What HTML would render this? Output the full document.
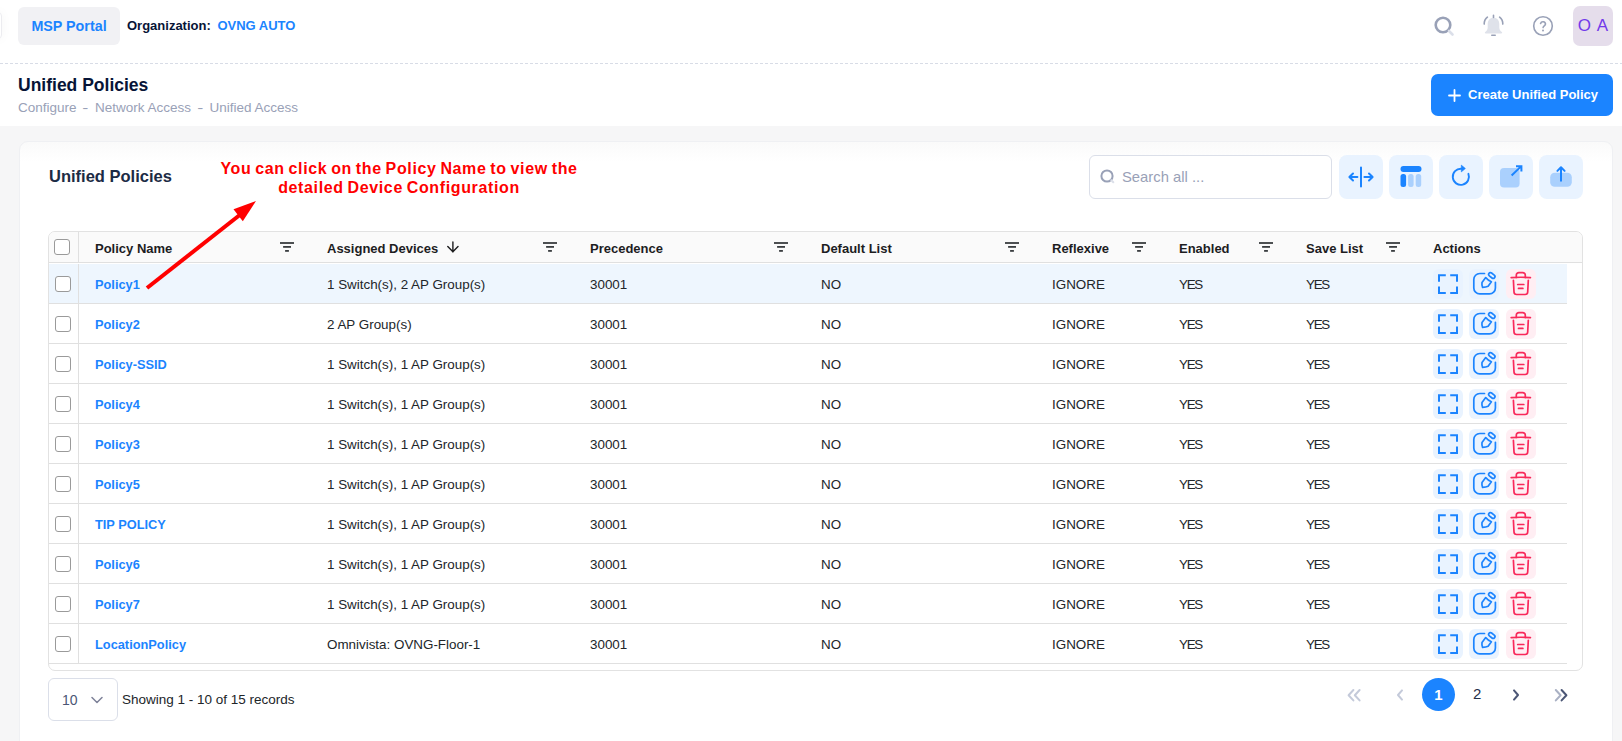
<!DOCTYPE html>
<html><head><meta charset="utf-8"><title>Unified Policies</title>
<style>
*{box-sizing:border-box;margin:0;padding:0}
html,body{width:1622px;height:741px;overflow:hidden;background:#fff;font-family:"Liberation Sans", sans-serif;}
.abs{position:absolute}
#hdr{position:absolute;left:0;top:0;width:1622px;height:126px;background:#fff}
#edge{position:absolute;left:-10px;top:12px;width:12px;height:27px;border:1px solid #ececf0;border-radius:4px;background:#fff;box-shadow:0 0 12px rgba(0,0,0,0.04)}
#msp{position:absolute;left:18px;top:7px;width:102px;height:38px;background:#f1f1f4;border-radius:6px;color:#1b84ff;font-size:14.3px;font-weight:700;line-height:38px;text-align:center}
#org{position:absolute;left:127px;top:18px;font-size:13px;font-weight:700;color:#071437;white-space:nowrap}
#org b{color:#1b84ff;margin-left:3px}
#dash{position:absolute;left:0;top:63px;width:1622px;height:1px;background-image:linear-gradient(to right,#d8dce6 60%,transparent 60%);background-size:5px 1px}
#avatar{position:absolute;left:1573px;top:6px;width:40px;height:40px;border-radius:7px;background:#e5ddeb;word-spacing:2px;color:#7239ea;font-size:17px;text-align:center;line-height:40px}
#title{position:absolute;left:18px;top:75px;font-size:17.5px;font-weight:700;color:#071437;white-space:nowrap}
#crumb{position:absolute;left:18px;top:100px;font-size:13.5px;color:#99a1b7;white-space:nowrap;word-spacing:0px}
#crumb i{font-style:normal;margin:0 7.4px 0 6.6px;display:inline-block;transform:scaleX(1.35)}
#create{position:absolute;left:1431px;top:74px;width:182px;height:42px;border-radius:7px;background:#1b84ff;color:#fff;font-size:13px;font-weight:700;line-height:42px;white-space:nowrap}
#create span{position:absolute;left:37px;top:0}
#create svg{position:absolute;left:17px;top:15px}
#content{position:absolute;left:0;top:126px;width:1622px;height:615px;background:#f6f6f7}
#card{position:absolute;left:19px;top:141px;width:1594px;height:700px;background:linear-gradient(#fafafa,#fff 20px);border:1px solid #eff0f3;border-radius:9px}
#ctitle{position:absolute;left:49px;top:167px;font-size:16.5px;font-weight:700;color:#1c2b45;white-space:nowrap}
#note{position:absolute;left:199px;top:159px;width:400px;text-align:center;color:#ff0000;font-size:16px;font-weight:700;line-height:19px;letter-spacing:0.63px;word-spacing:-1.2px}
#search{position:absolute;left:1089px;top:155px;width:243px;height:44px;border:1px solid #dbdfe9;border-radius:6px;background:#fff}
#search span{position:absolute;left:32px;top:13px;font-size:14.8px;color:#99a1b7;white-space:nowrap}
#search svg{position:absolute;left:10px;top:13px}
.tb{position:absolute;top:155px;width:44px;height:44px;border-radius:8px;background:#e9f3ff}
.tb svg{position:absolute;left:0;top:0}
#tbl{position:absolute;left:48px;top:231px;width:1535px;height:440px;border:1px solid #e2e2e2;border-radius:7px;overflow:hidden;background:#fff}
#th{position:absolute;left:0;top:0;width:1533px;height:31px;background:#fafafa;border-bottom:1px solid #e0e0e0}
.hc{position:absolute;top:9px;font-size:13px;font-weight:700;color:#1d1d1f;white-space:nowrap}
.flt{position:absolute;top:10px}
#vsep{position:absolute;left:29px;top:0;width:1px;height:31px;background:#e0e0e0}
#vsep2{position:absolute;left:29px;top:32px;width:1px;height:400px;background:#e0e0e0}
.row{position:absolute;left:0;width:1518px;height:40px;border-bottom:1px solid #e0e0e0;background:#fff}
.row.hl{background:#eef6fe}
.cb{position:absolute;left:6px;top:12px;width:16px;height:16px;border:1px solid #9a9a9a;border-radius:3px;background:#fff}
.c{position:absolute;top:13px;font-size:13.4px;color:#212529;white-space:nowrap}
a.c{color:#1b84ff;font-weight:700;font-size:12.8px;text-decoration:none}
.ys{letter-spacing:-1.3px}
.nm{left:46px} .dv{left:278px} .pr{left:541px} .df{left:772px} .rf{left:1003px} .en{left:1130px} .sl{left:1257px}
.ab{position:absolute;top:5px;width:30px;height:30px;border-radius:6px;background:#e9f3ff}
.ab.b3{background:#ffeef3}
.b1{left:1384px} .b2{left:1420px} .b3{left:1457px}
.ab svg{position:absolute;left:0;top:0}
#psel{position:absolute;left:48px;top:678px;width:70px;height:43px;border:1px solid #dbdfe9;border-radius:6px;background:#fff}
#psel span{position:absolute;left:13px;top:13px;font-size:14px;color:#4b5675}
#psel svg{position:absolute;left:42px;top:17px}
#showing{position:absolute;left:122px;top:692px;font-size:13.5px;color:#212529;white-space:nowrap}
#page1{position:absolute;left:1422px;top:677.5px;width:33px;height:33px;border-radius:50%;background:#1b84ff;color:#fff;font-size:15px;font-weight:700;text-align:center;line-height:33px}
#page2{position:absolute;left:1473px;top:685px;font-size:15px;color:#252f4a}
</style></head><body>
<div id="hdr">
 <div id="edge"></div>
 <div id="msp">MSP Portal</div>
 <div id="org">Organization: <b>OVNG AUTO</b></div>
 <div id="dash"></div>
 <svg class="abs" style="left:1432px;top:14px" width="26" height="26" viewBox="0 0 26 26"><circle cx="11" cy="11" r="7.3" fill="none" stroke="#99a1b7" stroke-width="2.6"/><path d="M17 17l3.5 3.5" stroke="#dbdfe9" stroke-width="2.6" stroke-linecap="round"/></svg>
 <svg class="abs" style="left:1476px;top:10px" width="36" height="32" viewBox="0 0 36 32"><path d="M17.5 7.8C13.8 7.8 11.7 10.5 11.7 14V17.5C11.7 19.5 10.5 21 9.2 22C8.5 22.6 8.9 23.5 9.8 23.5H25.2C26.1 23.5 26.5 22.6 25.8 22C24.5 21 23.3 19.5 23.3 17.5V14C23.3 10.5 21.2 7.8 17.5 7.8Z" fill="#dfe2ea"/><path d="M17.5 5.3V7.4M11.4 7.2A8.5 8.5 0 0 0 8.2 14.1M23.6 7.2A8.5 8.5 0 0 1 26.8 14.1M15.8 25.2H19.2" stroke="#99a1b7" stroke-width="1.6" stroke-linecap="round" fill="none"/></svg>
 <svg class="abs" style="left:1531px;top:14px" width="24" height="24" viewBox="0 0 24 24"><circle cx="12" cy="12" r="9.3" fill="none" stroke="#99a1b7" stroke-width="1.6"/><path d="M9.6 9.5a2.5 2.5 0 0 1 4.9.6c0 1.6-2.4 2-2.4 3.5" fill="none" stroke="#99a1b7" stroke-width="1.6" stroke-linecap="round"/><circle cx="12" cy="16.6" r="1" fill="#99a1b7"/></svg>
 <div id="avatar">O A</div>
 <div id="title">Unified Policies</div>
 <div id="crumb">Configure<i>-</i>Network Access<i>-</i>Unified Access</div>
 <div id="create"><svg width="13" height="13" viewBox="0 0 13 13"><path d="M6.5 1v11M1 6.5h11" stroke="#fff" stroke-width="1.8" stroke-linecap="round"/></svg><span>Create Unified Policy</span></div>
</div>
<div id="content"></div>
<div id="card"></div>
<div id="ctitle">Unified Policies</div>
<div id="note">You can click on the Policy Name to view the<br>detailed Device Configuration</div>
<div id="search"><svg width="16" height="16" viewBox="0 0 16 16"><circle cx="7" cy="7" r="5.6" fill="none" stroke="#99a1b7" stroke-width="2"/><path d="M11.3 11.3l2 2" stroke="#dbdfe9" stroke-width="2" stroke-linecap="round"/></svg><span>Search all ...</span></div>
<div class="tb" style="left:1339px"><svg width="44" height="44" viewBox="0 0 44 44" fill="none" stroke="#1b84ff" stroke-width="2" stroke-linecap="round" stroke-linejoin="round"><path d="M22 12.4V31.4M10.6 22H18.4M14 18.5L10.4 22 14 25.5M25.4 22H33.4M30 18.5L33.6 22 30 25.5"/></svg></div>
<div class="tb" style="left:1389px"><svg width="44" height="44" viewBox="0 0 44 44"><rect x="11.5" y="11" width="21" height="5.9" rx="2.9" fill="#1b84ff"/><rect x="11.5" y="19" width="5.6" height="13.1" rx="2.5" fill="#1b84ff"/><rect x="19.1" y="19" width="5.5" height="13.1" rx="2.5" fill="#aad0fd"/><rect x="26.7" y="19" width="5.5" height="13.1" rx="2.5" fill="#aad0fd"/></svg></div>
<div class="tb" style="left:1439px"><svg width="44" height="44" viewBox="0 0 44 44"><path d="M22.3 13.7A8.1 8.1 0 1 0 29.4 18.8" fill="none" stroke="#1b84ff" stroke-width="1.9" stroke-linecap="round"/><path d="M22.3 10.1L26.4 13.5L22.3 16.9Z" fill="#1b84ff" stroke="#1b84ff" stroke-width="0.6" stroke-linejoin="round"/></svg></div>
<div class="tb" style="left:1489px"><svg width="44" height="44" viewBox="0 0 44 44"><rect x="11" y="12.9" width="19.6" height="19.5" rx="4" fill="#aad0fd"/><path d="M22.6 20.5L31.8 11.6M27 11.3H32.4V16.6" fill="none" stroke="#1b84ff" stroke-width="2" stroke-linecap="butt" stroke-linejoin="miter"/></svg></div>
<div class="tb" style="left:1539px"><svg width="44" height="44" viewBox="0 0 44 44"><rect x="11.2" y="17.8" width="21.6" height="14" rx="4.5" fill="#aad0fd"/><path d="M22 25.8V12.6M18.4 15.9L22 12.3 25.6 15.9" fill="none" stroke="#1b84ff" stroke-width="2" stroke-linecap="round" stroke-linejoin="round"/></svg></div>

<div id="tbl">
 <div id="th">
  <div class="cb" style="left:5px;top:7px"></div>
  <span class="hc" style="left:46px">Policy Name</span><svg class="flt" style="left:231px" width="14" height="10" viewBox="0 0 14 10" fill="#3a3d40"><rect x="0" y="0.1" width="14" height="1.8"/><rect x="3.1" y="4" width="7.9" height="1.8"/><rect x="5.1" y="8" width="3.8" height="1.8"/></svg>
  <span class="hc" style="left:278px">Assigned Devices</span>
  <svg class="abs" style="left:398px;top:9px" width="12" height="12" viewBox="0 0 12 12"><path d="M5.9 0.9V11M0.8 5.6L5.9 10.8L11 5.6" fill="none" stroke="#1d1d1f" stroke-width="1.4" stroke-linecap="round" stroke-linejoin="round"/></svg>
  <svg class="flt" style="left:494px" width="14" height="10" viewBox="0 0 14 10" fill="#3a3d40"><rect x="0" y="0.1" width="14" height="1.8"/><rect x="3.1" y="4" width="7.9" height="1.8"/><rect x="5.1" y="8" width="3.8" height="1.8"/></svg>
  <span class="hc" style="left:541px">Precedence</span><svg class="flt" style="left:725px" width="14" height="10" viewBox="0 0 14 10" fill="#3a3d40"><rect x="0" y="0.1" width="14" height="1.8"/><rect x="3.1" y="4" width="7.9" height="1.8"/><rect x="5.1" y="8" width="3.8" height="1.8"/></svg>
  <span class="hc" style="left:772px">Default List</span><svg class="flt" style="left:956px" width="14" height="10" viewBox="0 0 14 10" fill="#3a3d40"><rect x="0" y="0.1" width="14" height="1.8"/><rect x="3.1" y="4" width="7.9" height="1.8"/><rect x="5.1" y="8" width="3.8" height="1.8"/></svg>
  <span class="hc" style="left:1003px">Reflexive</span><svg class="flt" style="left:1083px" width="14" height="10" viewBox="0 0 14 10" fill="#3a3d40"><rect x="0" y="0.1" width="14" height="1.8"/><rect x="3.1" y="4" width="7.9" height="1.8"/><rect x="5.1" y="8" width="3.8" height="1.8"/></svg>
  <span class="hc" style="left:1130px">Enabled</span><svg class="flt" style="left:1210px" width="14" height="10" viewBox="0 0 14 10" fill="#3a3d40"><rect x="0" y="0.1" width="14" height="1.8"/><rect x="3.1" y="4" width="7.9" height="1.8"/><rect x="5.1" y="8" width="3.8" height="1.8"/></svg>
  <span class="hc" style="left:1257px">Save List</span><svg class="flt" style="left:1337px" width="14" height="10" viewBox="0 0 14 10" fill="#3a3d40"><rect x="0" y="0.1" width="14" height="1.8"/><rect x="3.1" y="4" width="7.9" height="1.8"/><rect x="5.1" y="8" width="3.8" height="1.8"/></svg>
  <span class="hc" style="left:1384px">Actions</span>
 </div>
 <div class="row hl" style="top:32px">
<div class="cb"></div>
<a class="c nm">Policy1</a><span class="c dv">1 Switch(s), 2 AP Group(s)</span><span class="c pr">30001</span><span class="c df">NO</span><span class="c rf">IGNORE</span><span class="c en ys">YES</span><span class="c sl ys">YES</span>
<div class="ab b1"><svg width="30" height="30" viewBox="0 0 30 30" fill="none" stroke="#1b84ff" stroke-width="2"><path d="M6 12.8V6.3h6.8M17.2 6.3H24v6.5M24 17.5V24h-6.8M12.8 24H6v-6.5"/></svg></div><div class="ab b2"><svg width="30" height="30" viewBox="0 0 30 30" fill="none" stroke="#1b84ff" stroke-width="1.7" stroke-linecap="round" stroke-linejoin="round"><path d="M15.5 4.5H10.8A6 6 0 0 0 4.8 10.5V18.9A6 6 0 0 0 10.8 24.9H20.4A6 6 0 0 0 26.4 18.9V13.3"/><path d="M16.7 8.6Q19 11.6 22.4 12.8L19.1 17.2Q17 18.2 13.6 18.4Q12.6 16 13 13.4Z"/><rect x="19.3" y="4.7" width="7" height="3.6" rx="1.8" transform="rotate(38 22.8 6.5)"/></svg></div><div class="ab b3"><svg width="30" height="30" viewBox="0 0 30 30" fill="none" stroke="#f8285a" stroke-width="1.7" stroke-linecap="round" stroke-linejoin="round"><path d="M5.2 8.6Q14.8 7.9 24.4 8.6"/><path d="M10.3 8.4V6.3A2.6 2.6 0 0 1 12.9 3.6H16.7A2.6 2.6 0 0 1 19.3 6.3V8.4"/><path d="M7.4 11.3L8 23A2.6 2.6 0 0 0 10.6 25.5H19.1A2.6 2.6 0 0 0 21.7 23L22.3 11.3"/><path d="M11.7 15.5H17.8M12.5 19.4H16.9"/></svg></div>
</div>
<div class="row" style="top:72px">
<div class="cb"></div>
<a class="c nm">Policy2</a><span class="c dv">2 AP Group(s)</span><span class="c pr">30001</span><span class="c df">NO</span><span class="c rf">IGNORE</span><span class="c en ys">YES</span><span class="c sl ys">YES</span>
<div class="ab b1"><svg width="30" height="30" viewBox="0 0 30 30" fill="none" stroke="#1b84ff" stroke-width="2"><path d="M6 12.8V6.3h6.8M17.2 6.3H24v6.5M24 17.5V24h-6.8M12.8 24H6v-6.5"/></svg></div><div class="ab b2"><svg width="30" height="30" viewBox="0 0 30 30" fill="none" stroke="#1b84ff" stroke-width="1.7" stroke-linecap="round" stroke-linejoin="round"><path d="M15.5 4.5H10.8A6 6 0 0 0 4.8 10.5V18.9A6 6 0 0 0 10.8 24.9H20.4A6 6 0 0 0 26.4 18.9V13.3"/><path d="M16.7 8.6Q19 11.6 22.4 12.8L19.1 17.2Q17 18.2 13.6 18.4Q12.6 16 13 13.4Z"/><rect x="19.3" y="4.7" width="7" height="3.6" rx="1.8" transform="rotate(38 22.8 6.5)"/></svg></div><div class="ab b3"><svg width="30" height="30" viewBox="0 0 30 30" fill="none" stroke="#f8285a" stroke-width="1.7" stroke-linecap="round" stroke-linejoin="round"><path d="M5.2 8.6Q14.8 7.9 24.4 8.6"/><path d="M10.3 8.4V6.3A2.6 2.6 0 0 1 12.9 3.6H16.7A2.6 2.6 0 0 1 19.3 6.3V8.4"/><path d="M7.4 11.3L8 23A2.6 2.6 0 0 0 10.6 25.5H19.1A2.6 2.6 0 0 0 21.7 23L22.3 11.3"/><path d="M11.7 15.5H17.8M12.5 19.4H16.9"/></svg></div>
</div>
<div class="row" style="top:112px">
<div class="cb"></div>
<a class="c nm">Policy-SSID</a><span class="c dv">1 Switch(s), 1 AP Group(s)</span><span class="c pr">30001</span><span class="c df">NO</span><span class="c rf">IGNORE</span><span class="c en ys">YES</span><span class="c sl ys">YES</span>
<div class="ab b1"><svg width="30" height="30" viewBox="0 0 30 30" fill="none" stroke="#1b84ff" stroke-width="2"><path d="M6 12.8V6.3h6.8M17.2 6.3H24v6.5M24 17.5V24h-6.8M12.8 24H6v-6.5"/></svg></div><div class="ab b2"><svg width="30" height="30" viewBox="0 0 30 30" fill="none" stroke="#1b84ff" stroke-width="1.7" stroke-linecap="round" stroke-linejoin="round"><path d="M15.5 4.5H10.8A6 6 0 0 0 4.8 10.5V18.9A6 6 0 0 0 10.8 24.9H20.4A6 6 0 0 0 26.4 18.9V13.3"/><path d="M16.7 8.6Q19 11.6 22.4 12.8L19.1 17.2Q17 18.2 13.6 18.4Q12.6 16 13 13.4Z"/><rect x="19.3" y="4.7" width="7" height="3.6" rx="1.8" transform="rotate(38 22.8 6.5)"/></svg></div><div class="ab b3"><svg width="30" height="30" viewBox="0 0 30 30" fill="none" stroke="#f8285a" stroke-width="1.7" stroke-linecap="round" stroke-linejoin="round"><path d="M5.2 8.6Q14.8 7.9 24.4 8.6"/><path d="M10.3 8.4V6.3A2.6 2.6 0 0 1 12.9 3.6H16.7A2.6 2.6 0 0 1 19.3 6.3V8.4"/><path d="M7.4 11.3L8 23A2.6 2.6 0 0 0 10.6 25.5H19.1A2.6 2.6 0 0 0 21.7 23L22.3 11.3"/><path d="M11.7 15.5H17.8M12.5 19.4H16.9"/></svg></div>
</div>
<div class="row" style="top:152px">
<div class="cb"></div>
<a class="c nm">Policy4</a><span class="c dv">1 Switch(s), 1 AP Group(s)</span><span class="c pr">30001</span><span class="c df">NO</span><span class="c rf">IGNORE</span><span class="c en ys">YES</span><span class="c sl ys">YES</span>
<div class="ab b1"><svg width="30" height="30" viewBox="0 0 30 30" fill="none" stroke="#1b84ff" stroke-width="2"><path d="M6 12.8V6.3h6.8M17.2 6.3H24v6.5M24 17.5V24h-6.8M12.8 24H6v-6.5"/></svg></div><div class="ab b2"><svg width="30" height="30" viewBox="0 0 30 30" fill="none" stroke="#1b84ff" stroke-width="1.7" stroke-linecap="round" stroke-linejoin="round"><path d="M15.5 4.5H10.8A6 6 0 0 0 4.8 10.5V18.9A6 6 0 0 0 10.8 24.9H20.4A6 6 0 0 0 26.4 18.9V13.3"/><path d="M16.7 8.6Q19 11.6 22.4 12.8L19.1 17.2Q17 18.2 13.6 18.4Q12.6 16 13 13.4Z"/><rect x="19.3" y="4.7" width="7" height="3.6" rx="1.8" transform="rotate(38 22.8 6.5)"/></svg></div><div class="ab b3"><svg width="30" height="30" viewBox="0 0 30 30" fill="none" stroke="#f8285a" stroke-width="1.7" stroke-linecap="round" stroke-linejoin="round"><path d="M5.2 8.6Q14.8 7.9 24.4 8.6"/><path d="M10.3 8.4V6.3A2.6 2.6 0 0 1 12.9 3.6H16.7A2.6 2.6 0 0 1 19.3 6.3V8.4"/><path d="M7.4 11.3L8 23A2.6 2.6 0 0 0 10.6 25.5H19.1A2.6 2.6 0 0 0 21.7 23L22.3 11.3"/><path d="M11.7 15.5H17.8M12.5 19.4H16.9"/></svg></div>
</div>
<div class="row" style="top:192px">
<div class="cb"></div>
<a class="c nm">Policy3</a><span class="c dv">1 Switch(s), 1 AP Group(s)</span><span class="c pr">30001</span><span class="c df">NO</span><span class="c rf">IGNORE</span><span class="c en ys">YES</span><span class="c sl ys">YES</span>
<div class="ab b1"><svg width="30" height="30" viewBox="0 0 30 30" fill="none" stroke="#1b84ff" stroke-width="2"><path d="M6 12.8V6.3h6.8M17.2 6.3H24v6.5M24 17.5V24h-6.8M12.8 24H6v-6.5"/></svg></div><div class="ab b2"><svg width="30" height="30" viewBox="0 0 30 30" fill="none" stroke="#1b84ff" stroke-width="1.7" stroke-linecap="round" stroke-linejoin="round"><path d="M15.5 4.5H10.8A6 6 0 0 0 4.8 10.5V18.9A6 6 0 0 0 10.8 24.9H20.4A6 6 0 0 0 26.4 18.9V13.3"/><path d="M16.7 8.6Q19 11.6 22.4 12.8L19.1 17.2Q17 18.2 13.6 18.4Q12.6 16 13 13.4Z"/><rect x="19.3" y="4.7" width="7" height="3.6" rx="1.8" transform="rotate(38 22.8 6.5)"/></svg></div><div class="ab b3"><svg width="30" height="30" viewBox="0 0 30 30" fill="none" stroke="#f8285a" stroke-width="1.7" stroke-linecap="round" stroke-linejoin="round"><path d="M5.2 8.6Q14.8 7.9 24.4 8.6"/><path d="M10.3 8.4V6.3A2.6 2.6 0 0 1 12.9 3.6H16.7A2.6 2.6 0 0 1 19.3 6.3V8.4"/><path d="M7.4 11.3L8 23A2.6 2.6 0 0 0 10.6 25.5H19.1A2.6 2.6 0 0 0 21.7 23L22.3 11.3"/><path d="M11.7 15.5H17.8M12.5 19.4H16.9"/></svg></div>
</div>
<div class="row" style="top:232px">
<div class="cb"></div>
<a class="c nm">Policy5</a><span class="c dv">1 Switch(s), 1 AP Group(s)</span><span class="c pr">30001</span><span class="c df">NO</span><span class="c rf">IGNORE</span><span class="c en ys">YES</span><span class="c sl ys">YES</span>
<div class="ab b1"><svg width="30" height="30" viewBox="0 0 30 30" fill="none" stroke="#1b84ff" stroke-width="2"><path d="M6 12.8V6.3h6.8M17.2 6.3H24v6.5M24 17.5V24h-6.8M12.8 24H6v-6.5"/></svg></div><div class="ab b2"><svg width="30" height="30" viewBox="0 0 30 30" fill="none" stroke="#1b84ff" stroke-width="1.7" stroke-linecap="round" stroke-linejoin="round"><path d="M15.5 4.5H10.8A6 6 0 0 0 4.8 10.5V18.9A6 6 0 0 0 10.8 24.9H20.4A6 6 0 0 0 26.4 18.9V13.3"/><path d="M16.7 8.6Q19 11.6 22.4 12.8L19.1 17.2Q17 18.2 13.6 18.4Q12.6 16 13 13.4Z"/><rect x="19.3" y="4.7" width="7" height="3.6" rx="1.8" transform="rotate(38 22.8 6.5)"/></svg></div><div class="ab b3"><svg width="30" height="30" viewBox="0 0 30 30" fill="none" stroke="#f8285a" stroke-width="1.7" stroke-linecap="round" stroke-linejoin="round"><path d="M5.2 8.6Q14.8 7.9 24.4 8.6"/><path d="M10.3 8.4V6.3A2.6 2.6 0 0 1 12.9 3.6H16.7A2.6 2.6 0 0 1 19.3 6.3V8.4"/><path d="M7.4 11.3L8 23A2.6 2.6 0 0 0 10.6 25.5H19.1A2.6 2.6 0 0 0 21.7 23L22.3 11.3"/><path d="M11.7 15.5H17.8M12.5 19.4H16.9"/></svg></div>
</div>
<div class="row" style="top:272px">
<div class="cb"></div>
<a class="c nm">TIP POLICY</a><span class="c dv">1 Switch(s), 1 AP Group(s)</span><span class="c pr">30001</span><span class="c df">NO</span><span class="c rf">IGNORE</span><span class="c en ys">YES</span><span class="c sl ys">YES</span>
<div class="ab b1"><svg width="30" height="30" viewBox="0 0 30 30" fill="none" stroke="#1b84ff" stroke-width="2"><path d="M6 12.8V6.3h6.8M17.2 6.3H24v6.5M24 17.5V24h-6.8M12.8 24H6v-6.5"/></svg></div><div class="ab b2"><svg width="30" height="30" viewBox="0 0 30 30" fill="none" stroke="#1b84ff" stroke-width="1.7" stroke-linecap="round" stroke-linejoin="round"><path d="M15.5 4.5H10.8A6 6 0 0 0 4.8 10.5V18.9A6 6 0 0 0 10.8 24.9H20.4A6 6 0 0 0 26.4 18.9V13.3"/><path d="M16.7 8.6Q19 11.6 22.4 12.8L19.1 17.2Q17 18.2 13.6 18.4Q12.6 16 13 13.4Z"/><rect x="19.3" y="4.7" width="7" height="3.6" rx="1.8" transform="rotate(38 22.8 6.5)"/></svg></div><div class="ab b3"><svg width="30" height="30" viewBox="0 0 30 30" fill="none" stroke="#f8285a" stroke-width="1.7" stroke-linecap="round" stroke-linejoin="round"><path d="M5.2 8.6Q14.8 7.9 24.4 8.6"/><path d="M10.3 8.4V6.3A2.6 2.6 0 0 1 12.9 3.6H16.7A2.6 2.6 0 0 1 19.3 6.3V8.4"/><path d="M7.4 11.3L8 23A2.6 2.6 0 0 0 10.6 25.5H19.1A2.6 2.6 0 0 0 21.7 23L22.3 11.3"/><path d="M11.7 15.5H17.8M12.5 19.4H16.9"/></svg></div>
</div>
<div class="row" style="top:312px">
<div class="cb"></div>
<a class="c nm">Policy6</a><span class="c dv">1 Switch(s), 1 AP Group(s)</span><span class="c pr">30001</span><span class="c df">NO</span><span class="c rf">IGNORE</span><span class="c en ys">YES</span><span class="c sl ys">YES</span>
<div class="ab b1"><svg width="30" height="30" viewBox="0 0 30 30" fill="none" stroke="#1b84ff" stroke-width="2"><path d="M6 12.8V6.3h6.8M17.2 6.3H24v6.5M24 17.5V24h-6.8M12.8 24H6v-6.5"/></svg></div><div class="ab b2"><svg width="30" height="30" viewBox="0 0 30 30" fill="none" stroke="#1b84ff" stroke-width="1.7" stroke-linecap="round" stroke-linejoin="round"><path d="M15.5 4.5H10.8A6 6 0 0 0 4.8 10.5V18.9A6 6 0 0 0 10.8 24.9H20.4A6 6 0 0 0 26.4 18.9V13.3"/><path d="M16.7 8.6Q19 11.6 22.4 12.8L19.1 17.2Q17 18.2 13.6 18.4Q12.6 16 13 13.4Z"/><rect x="19.3" y="4.7" width="7" height="3.6" rx="1.8" transform="rotate(38 22.8 6.5)"/></svg></div><div class="ab b3"><svg width="30" height="30" viewBox="0 0 30 30" fill="none" stroke="#f8285a" stroke-width="1.7" stroke-linecap="round" stroke-linejoin="round"><path d="M5.2 8.6Q14.8 7.9 24.4 8.6"/><path d="M10.3 8.4V6.3A2.6 2.6 0 0 1 12.9 3.6H16.7A2.6 2.6 0 0 1 19.3 6.3V8.4"/><path d="M7.4 11.3L8 23A2.6 2.6 0 0 0 10.6 25.5H19.1A2.6 2.6 0 0 0 21.7 23L22.3 11.3"/><path d="M11.7 15.5H17.8M12.5 19.4H16.9"/></svg></div>
</div>
<div class="row" style="top:352px">
<div class="cb"></div>
<a class="c nm">Policy7</a><span class="c dv">1 Switch(s), 1 AP Group(s)</span><span class="c pr">30001</span><span class="c df">NO</span><span class="c rf">IGNORE</span><span class="c en ys">YES</span><span class="c sl ys">YES</span>
<div class="ab b1"><svg width="30" height="30" viewBox="0 0 30 30" fill="none" stroke="#1b84ff" stroke-width="2"><path d="M6 12.8V6.3h6.8M17.2 6.3H24v6.5M24 17.5V24h-6.8M12.8 24H6v-6.5"/></svg></div><div class="ab b2"><svg width="30" height="30" viewBox="0 0 30 30" fill="none" stroke="#1b84ff" stroke-width="1.7" stroke-linecap="round" stroke-linejoin="round"><path d="M15.5 4.5H10.8A6 6 0 0 0 4.8 10.5V18.9A6 6 0 0 0 10.8 24.9H20.4A6 6 0 0 0 26.4 18.9V13.3"/><path d="M16.7 8.6Q19 11.6 22.4 12.8L19.1 17.2Q17 18.2 13.6 18.4Q12.6 16 13 13.4Z"/><rect x="19.3" y="4.7" width="7" height="3.6" rx="1.8" transform="rotate(38 22.8 6.5)"/></svg></div><div class="ab b3"><svg width="30" height="30" viewBox="0 0 30 30" fill="none" stroke="#f8285a" stroke-width="1.7" stroke-linecap="round" stroke-linejoin="round"><path d="M5.2 8.6Q14.8 7.9 24.4 8.6"/><path d="M10.3 8.4V6.3A2.6 2.6 0 0 1 12.9 3.6H16.7A2.6 2.6 0 0 1 19.3 6.3V8.4"/><path d="M7.4 11.3L8 23A2.6 2.6 0 0 0 10.6 25.5H19.1A2.6 2.6 0 0 0 21.7 23L22.3 11.3"/><path d="M11.7 15.5H17.8M12.5 19.4H16.9"/></svg></div>
</div>
<div class="row" style="top:392px">
<div class="cb"></div>
<a class="c nm">LocationPolicy</a><span class="c dv">Omnivista: OVNG-Floor-1</span><span class="c pr">30001</span><span class="c df">NO</span><span class="c rf">IGNORE</span><span class="c en ys">YES</span><span class="c sl ys">YES</span>
<div class="ab b1"><svg width="30" height="30" viewBox="0 0 30 30" fill="none" stroke="#1b84ff" stroke-width="2"><path d="M6 12.8V6.3h6.8M17.2 6.3H24v6.5M24 17.5V24h-6.8M12.8 24H6v-6.5"/></svg></div><div class="ab b2"><svg width="30" height="30" viewBox="0 0 30 30" fill="none" stroke="#1b84ff" stroke-width="1.7" stroke-linecap="round" stroke-linejoin="round"><path d="M15.5 4.5H10.8A6 6 0 0 0 4.8 10.5V18.9A6 6 0 0 0 10.8 24.9H20.4A6 6 0 0 0 26.4 18.9V13.3"/><path d="M16.7 8.6Q19 11.6 22.4 12.8L19.1 17.2Q17 18.2 13.6 18.4Q12.6 16 13 13.4Z"/><rect x="19.3" y="4.7" width="7" height="3.6" rx="1.8" transform="rotate(38 22.8 6.5)"/></svg></div><div class="ab b3"><svg width="30" height="30" viewBox="0 0 30 30" fill="none" stroke="#f8285a" stroke-width="1.7" stroke-linecap="round" stroke-linejoin="round"><path d="M5.2 8.6Q14.8 7.9 24.4 8.6"/><path d="M10.3 8.4V6.3A2.6 2.6 0 0 1 12.9 3.6H16.7A2.6 2.6 0 0 1 19.3 6.3V8.4"/><path d="M7.4 11.3L8 23A2.6 2.6 0 0 0 10.6 25.5H19.1A2.6 2.6 0 0 0 21.7 23L22.3 11.3"/><path d="M11.7 15.5H17.8M12.5 19.4H16.9"/></svg></div>
</div>
 <div id="vsep"></div><div id="vsep2"></div>
</div>

<svg class="abs" style="left:0;top:0" width="1622" height="741" viewBox="0 0 1622 741" pointer-events="none"><path d="M147 288L241 214" stroke="#ff0000" stroke-width="4" stroke-linecap="butt"/><path d="M256 201L233.5 209.3L242.8 221.2Z" fill="#ff0000"/></svg>

<div id="psel"><span>10</span><svg width="12" height="8" viewBox="0 0 12 8"><path d="M1 1.5l5 5 5-5" fill="none" stroke="#7e8299" stroke-width="1.5" stroke-linecap="round" stroke-linejoin="round"/></svg></div>
<div id="showing">Showing 1 - 10 of 15 records</div>
<svg class="abs" style="left:1345px;top:687px" width="20" height="16" viewBox="0 0 20 16" fill="none" stroke-width="2" stroke-linecap="round" stroke-linejoin="round"><path d="M8.4 3L3.6 8.2 8.4 13.4" stroke="#c4cada"/><path d="M14.6 3L9.8 8.2 14.6 13.4" stroke="#c4cada"/></svg>
<svg class="abs" style="left:1393px;top:687px" width="14" height="16" viewBox="0 0 14 16" fill="none" stroke-width="2" stroke-linecap="round" stroke-linejoin="round"><path d="M9 3.4L5 8l4 4.6" stroke="#c4cada"/></svg>
<div id="page1">1</div>
<div id="page2">2</div>
<svg class="abs" style="left:1509px;top:687px" width="14" height="16" viewBox="0 0 14 16" fill="none" stroke-width="2" stroke-linecap="round" stroke-linejoin="round"><path d="M5 3.4L9 8l-4 4.6" stroke="#4b5675"/></svg>
<svg class="abs" style="left:1551px;top:687px" width="20" height="16" viewBox="0 0 20 16" fill="none" stroke-width="2" stroke-linecap="round" stroke-linejoin="round"><path d="M4.8 3L9.6 8.2 4.8 13.4" stroke="#aab1c4"/><path d="M10.6 3L15.4 8.2 10.6 13.4" stroke="#4b5675"/></svg>
</body></html>
